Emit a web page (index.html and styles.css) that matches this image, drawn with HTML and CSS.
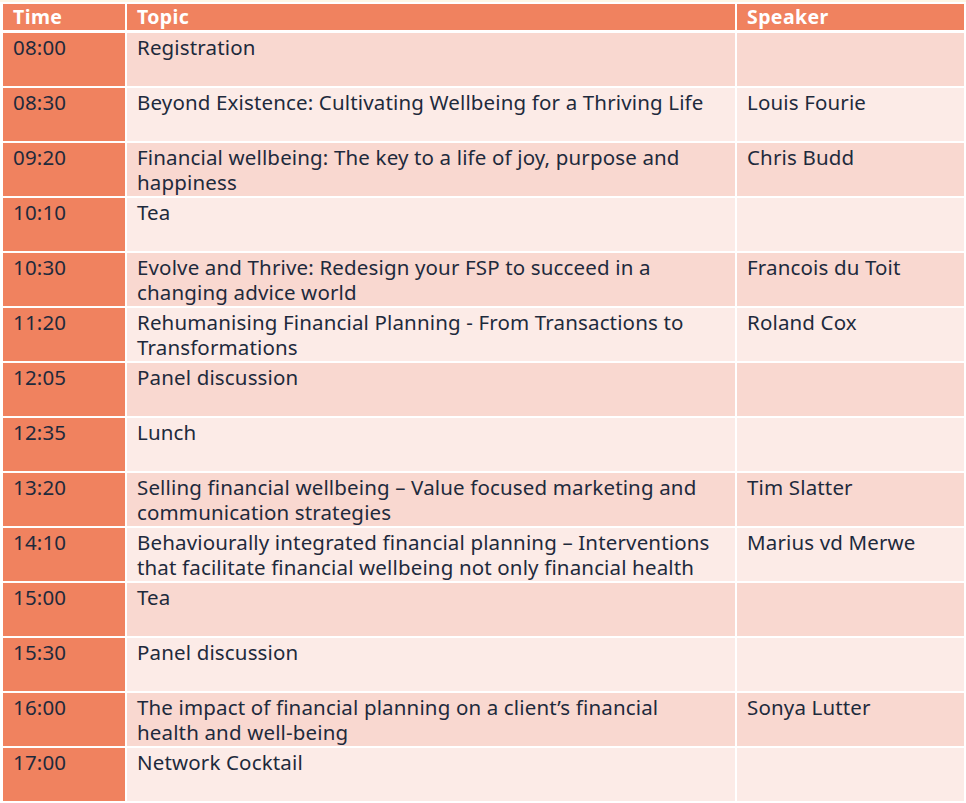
FILE: index.html
```html
<!DOCTYPE html>
<html>
<head>
<meta charset="utf-8">
<link rel="stylesheet" href="styles.css">
</head>
<body>
<table class="agenda">
  <colgroup><col class="c-time"><col class="c-topic"><col class="c-speaker"></colgroup>
  <thead>
    <tr><th>Time</th><th>Topic</th><th>Speaker</th></tr>
  </thead>
  <tbody>
    <tr class="odd"><td class="t">08:00</td><td>Registration</td><td></td></tr>
    <tr class="even"><td class="t">08:30</td><td>Beyond Existence: Cultivating Wellbeing for a Thriving Life</td><td>Louis Fourie</td></tr>
    <tr class="odd"><td class="t">09:20</td><td>Financial wellbeing: The key to a life of joy, purpose and happiness</td><td>Chris Budd</td></tr>
    <tr class="even"><td class="t">10:10</td><td>Tea</td><td></td></tr>
    <tr class="odd"><td class="t">10:30</td><td>Evolve and Thrive: Redesign your FSP to succeed in a changing advice world</td><td>Francois du Toit</td></tr>
    <tr class="even"><td class="t">11:20</td><td>Rehumanising Financial Planning - From Transactions to Transformations</td><td>Roland Cox</td></tr>
    <tr class="odd"><td class="t">12:05</td><td>Panel discussion</td><td></td></tr>
    <tr class="even"><td class="t">12:35</td><td>Lunch</td><td></td></tr>
    <tr class="odd"><td class="t">13:20</td><td>Selling financial wellbeing – Value focused marketing and communication strategies</td><td>Tim Slatter</td></tr>
    <tr class="even"><td class="t">14:10</td><td>Behaviourally integrated financial planning – Interventions that facilitate financial wellbeing not only financial health</td><td>Marius vd Merwe</td></tr>
    <tr class="odd"><td class="t">15:00</td><td>Tea</td><td></td></tr>
    <tr class="even"><td class="t">15:30</td><td>Panel discussion</td><td></td></tr>
    <tr class="odd"><td class="t">16:00</td><td>The impact of financial planning on a client’s financial health and well-being</td><td>Sonya Lutter</td></tr>
    <tr class="even"><td class="t">17:00</td><td>Network Cocktail</td><td></td></tr>
  </tbody>
</table>
</body>
</html>
```
FILE: styles.css
```css
html, body {
  margin: 0;
  padding: 0;
  background: #ffffff;
}
body {
  border-top: 2px solid #fdf7e6;
  padding: 0 0 0 1px;
  font-family: "Noto Sans", "Open Sans", sans-serif;
  color: #1e2a3c;
}
.agenda {
  border-collapse: separate;
  border-spacing: 2px;
  table-layout: fixed;
  width: 965px;
}
.c-time { width: 122px; }
.c-topic { width: 608px; }
.c-speaker { width: 227px; }
.agenda th {
  background: #f0825f;
  color: #ffffff;
  font-weight: 700;
  font-size: 19.5px;
  letter-spacing: 0.4px;
  text-align: left;
  height: 26px;
  padding: 0 10px;
  line-height: 26px;
  border-bottom: 1px solid #ffffff;
}
.agenda tbody td {
  height: 53px;
  box-sizing: border-box;
  padding: 2px 10px 0 10px;
  vertical-align: top;
  font-size: 20.5px;
  letter-spacing: 0.15px;
  line-height: 25px;
}
.agenda tbody td.t { background: #f0825f; }
.odd td { background: #f9d8d0; }
.even td { background: #fcebe7; }
```
